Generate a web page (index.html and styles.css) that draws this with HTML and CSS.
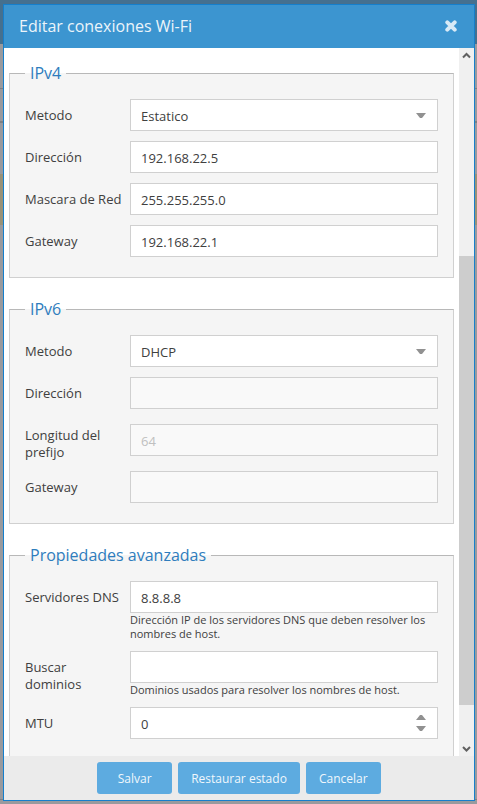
FILE: index.html
```html
<!DOCTYPE html>
<html lang="es">
<head>
<meta charset="utf-8">
<meta name="viewport" content="width=device-width, initial-scale=1">
<title>Editar conexiones Wi-Fi</title>
<link rel="stylesheet" href="styles.css">
</head>
<body>
<div class="backdrop" aria-hidden="true">
  <div class="backdrop-bar"></div>
  <div class="backdrop-toolbar"></div>
  <div class="backdrop-head"></div>
  <div class="backdrop-row"></div>
  <div class="backdrop-selected"></div>
  <div class="backdrop-rest"></div>
</div>
<form class="dialog" role="dialog" aria-labelledby="title">
  <header class="dialog-header">
    <h1 class="dialog-title" id="title">Editar conexiones Wi-Fi</h1>
    <button class="close" type="button" aria-label="Cerrar">
      <svg viewBox="0 0 12 12" width="12" height="12"><path d="M2.300 2.300 9.700 9.700M9.700 2.300 2.300 9.700" stroke="currentColor" stroke-width="4" stroke-linecap="round"/></svg>
    </button>
  </header>
  <div class="dialog-main">
    <div class="dialog-body">
      <fieldset class="group">
        <legend>IPv4</legend>
        <div class="row">
          <label for="m4">Metodo</label>
          <div class="field select">
            <select id="m4" class="control"><option>Estatico</option><option>DHCP</option></select>
            <svg class="arrow" viewBox="0 0 10 5" width="10" height="5"><path d="M0 0h10L6 5H4z"/></svg>
          </div>
        </div>
        <div class="row">
          <label for="d4">Dirección</label>
          <div class="field"><input id="d4" class="control" type="text" value="192.168.22.5"></div>
        </div>
        <div class="row">
          <label for="n4">Mascara de Red</label>
          <div class="field"><input id="n4" class="control" type="text" value="255.255.255.0"></div>
        </div>
        <div class="row">
          <label for="g4">Gateway</label>
          <div class="field"><input id="g4" class="control" type="text" value="192.168.22.1"></div>
        </div>
      </fieldset>
      <fieldset class="group">
        <legend>IPv6</legend>
        <div class="row">
          <label for="m6">Metodo</label>
          <div class="field select">
            <select id="m6" class="control"><option>DHCP</option><option>Estatico</option></select>
            <svg class="arrow" viewBox="0 0 10 5" width="10" height="5"><path d="M0 0h10L6 5H4z"/></svg>
          </div>
        </div>
        <div class="row">
          <label for="d6">Dirección</label>
          <div class="field"><input id="d6" class="control" type="text" disabled></div>
        </div>
        <div class="row">
          <label for="p6">Longitud del prefijo</label>
          <div class="field"><input id="p6" class="control" type="text" value="64" disabled></div>
        </div>
        <div class="row">
          <label for="g6">Gateway</label>
          <div class="field"><input id="g6" class="control" type="text" disabled></div>
        </div>
      </fieldset>
      <fieldset class="group">
        <legend>Propiedades avanzadas</legend>
        <div class="row row-top">
          <label for="dns">Servidores DNS</label>
          <div class="field">
            <input id="dns" class="control" type="text" value="8.8.8.8" aria-describedby="dns-help">
            <p class="help" id="dns-help">Dirección IP de los servidores DNS que deben resolver los nombres de host.</p>
          </div>
        </div>
        <div class="row row-top">
          <label for="dom">Buscar dominios</label>
          <div class="field">
            <input id="dom" class="control" type="text" aria-describedby="dom-help">
            <p class="help" id="dom-help">Dominios usados para resolver los nombres de host.</p>
          </div>
        </div>
        <div class="row">
          <label for="mtu">MTU</label>
          <div class="field">
            <input id="mtu" class="control" type="number" value="0">
            <svg class="arrow spinner" viewBox="0 0 10 16" width="10" height="16"><path d="M0 5h10L6 0H4zM0 11h10l-4 5H4z"/></svg>
          </div>
        </div>
      </fieldset>
    </div>
    <div class="scrollbar" aria-hidden="true">
      <svg class="scroll-icon" viewBox="0 0 9 15" width="9" height="15"><path d="M1 9.500 4.500 6 8 9.500"/></svg>
      <div class="scroll-track"><div class="scroll-before"></div><div class="scroll-thumb"></div><div class="scroll-after"></div></div>
      <svg class="scroll-icon" viewBox="0 0 9 15" width="9" height="15"><path d="M1 6 4.500 9.500 8 6"/></svg>
    </div>
  </div>
  <footer class="dialog-footer">
    <button class="button" type="submit">Salvar</button>
    <button class="button" type="reset">Restaurar estado</button>
    <button class="button" type="button">Cancelar</button>
  </footer>
</form>
</body>
</html>
```
FILE: styles.css
```css
* {
  box-sizing: border-box;
}

body {
  margin: 0;
  height: 100vh;
  padding: 4px 2px 3px 3px;
  overflow: hidden;
  background: #999a9e;
  color: #404040;
  font: 13px/17px "Open Sans", "Noto Sans", sans-serif;
}

/* Dimmed page behind the dialog */
.backdrop {
  position: fixed;
  inset: 0;
  z-index: -1;
  display: flex;
  flex-direction: column;
}

.backdrop-bar {
  height: 44px;
  background: #45708f;
}

.backdrop-toolbar {
  height: 45px;
  border-bottom: 1px solid #7e8083;
}

.backdrop-head {
  height: 34px;
  border-bottom: 2px solid #7e8083;
}

.backdrop-row {
  height: 51px;
}

.backdrop-selected {
  height: 51px;
  background: #999278;
}

.backdrop-rest {
  flex: 1;
  margin-bottom: 4px;
  border-bottom: 1px solid #808285;
}

.dialog {
  display: flex;
  flex-direction: column;
  height: 100%;
  border: 1px solid #157fcc;
  background: #fff;
}

.dialog-header {
  display: flex;
  align-items: center;
  justify-content: space-between;
  height: 43px;
  padding: 0 17px 1px 15px;
  background: #3c95d0;
  color: #ebf4fa;
}

.dialog-title {
  margin: 0;
  font-size: 16px;
  font-weight: 400;
  line-height: 22px;
}

.close {
  display: flex;
  padding: 0;
  border: 0;
  background: none;
  color: #d8eaf6;
}

.dialog-main {
  display: flex;
  flex: 1;
  min-height: 0;
}

.dialog-body {
  flex: 1;
  min-width: 0;
  padding: 14px 5px 0;
  overflow-y: auto;
  scrollbar-width: none;
}

.group {
  min-width: 0;
  margin: 0 0 20px;
  padding: 14px 15px 10px;
  border: 1px solid #d0d0d0;
  border-top-color: #b8b8b8;
  background: #f5f5f5;
}

.group legend {
  padding: 0 5px;
  color: #2f7dbd;
  font-size: 16px;
  line-height: 23px;
}

.row {
  display: flex;
  align-items: center;
  margin-bottom: 10px;
}

.row-top {
  align-items: flex-start;
}

.row label {
  flex: 0 0 105px;
  min-height: 32px;
  padding: 8px 5px 0 0;
}

.field {
  position: relative;
  flex: 1;
  min-width: 0;
}

.control {
  display: block;
  width: 100%;
  height: 32px;
  margin: 0;
  padding: 2px 10px 0;
  border: 1px solid #d0d0d0;
  border-radius: 0;
  background: #fff;
  color: #404040;
  font: inherit;
  appearance: none;
}

.control[type="number"] {
  appearance: textfield;
}

.control:disabled {
  background: #f9f9f9;
  color: #c0c0c0;
}

.arrow {
  position: absolute;
  top: 14px;
  right: 12px;
  fill: #919191;
  pointer-events: none;
}

.spinner {
  top: 8px;
}

.help {
  margin: 0;
  font-size: 11px;
  line-height: 14px;
}

.scrollbar {
  display: flex;
  flex: 0 0 15px;
  flex-direction: column;
  align-items: center;
  background: #f0f0f0;
}

.scroll-icon {
  fill: none;
  stroke: #606060;
  stroke-width: 2;
}

.scroll-track {
  display: flex;
  flex: 1;
  flex-direction: column;
  align-self: stretch;
}

.scroll-before {
  flex: 193;
}

.scroll-thumb {
  flex: 449;
  background: #cdcdcd;
}

.scroll-after {
  flex: 36;
}

.dialog-footer {
  display: flex;
  align-items: center;
  justify-content: center;
  gap: 6px;
  height: 44px;
  background: #ebebeb;
}

.button {
  min-width: 75px;
  height: 32px;
  padding: 0 13px;
  border: 0;
  border-radius: 3px;
  background: #5dabe0;
  color: #f0f7fc;
  font: inherit;
  font-size: 12px;
}
```
